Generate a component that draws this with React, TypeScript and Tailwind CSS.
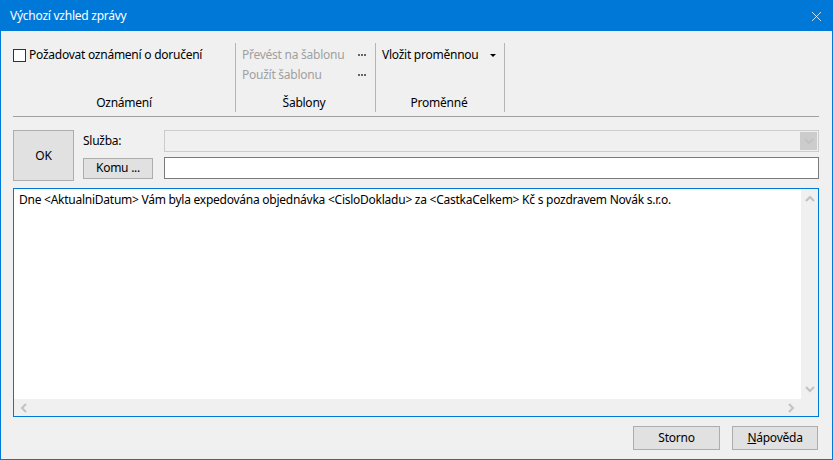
import { X } from 'lucide-react';

const font = { fontFamily: '"Noto Sans", "Liberation Sans", sans-serif' };

function Chevron({ dir }: { dir: 'up' | 'down' | 'left' | 'right' }) {
  const d = {
    up: 'M1 6 L5 2 L9 6',
    down: 'M1 2 L5 6 L9 2',
    left: 'M6 1 L2 5 L6 9',
    right: 'M2 1 L6 5 L2 9',
  }[dir];
  const box = dir === 'up' || dir === 'down' ? '0 0 10 8' : '0 0 8 10';
  return (
    <svg viewBox={box} className={dir === 'up' || dir === 'down' ? 'w-[10px] h-[8px]' : 'w-[8px] h-[10px]'}>
      <path d={d} fill="none" stroke="#c2c2c2" strokeWidth="2" />
    </svg>
  );
}

function Dots() {
  return (
    <span className="flex gap-[1px] items-center">
      <span className="w-[2px] h-[2px] bg-[#666]" />
      <span className="w-[2px] h-[2px] bg-[#666]" />
      <span className="w-[2px] h-[2px] bg-[#666]" />
    </span>
  );
}

export default function App() {
  return (
    <div
      className="w-[833px] h-[460px] bg-[#f0f0f0] border border-[#0078d7] flex flex-col text-[12px] tracking-[-0.25px] text-black overflow-hidden"
      style={font}
    >
      {/* Title bar */}
      <div className="h-[30px] bg-[#0078d7] flex items-center justify-between pl-[9px] pr-[7px] text-white shrink-0">
        <span className="text-[12px]">Výchozí vzhled zprávy</span>
        <X className="w-[17px] h-[17px]" strokeWidth={1.1} />
      </div>

      {/* Ribbon */}
      <div className="ml-[12px] mr-[13px] mt-[12px] h-[74px] flex border-b border-[#a0a0a0]">
        <div className="w-[223px] flex flex-col border-r border-[#b4b4b4] mb-[4px] pt-[2px]">
          <label className="flex items-center gap-[3px] h-[20px]">
            <span className="w-[13px] h-[13px] border border-[#333] bg-white" />
            <span>Požadovat oznámení o doručení</span>
          </label>
          <div className="mt-auto text-center">Oznámení</div>
        </div>
        <div className="w-[140px] flex flex-col border-r border-[#b4b4b4] pl-[6px] pr-[9px] mb-[4px] pt-[2px]">
          <div className="flex items-center justify-between h-[20px] text-[#a0a0a0]">
            <span>Převést na šablonu</span>
            <Dots />
          </div>
          <div className="flex items-center justify-between h-[20px] text-[#a0a0a0]">
            <span>Použít šablonu</span>
            <Dots />
          </div>
          <div className="mt-auto text-center">Šablony</div>
        </div>
        <div className="w-[129px] flex flex-col border-r border-[#b4b4b4] pl-[6px] pr-[8px] mb-[4px] pt-[2px]">
          <div className="flex items-center justify-between h-[20px]">
            <span>Vložit proměnnou</span>
            <span className="w-0 h-0 border-l-[3px] border-r-[3px] border-t-[3px] border-l-transparent border-r-transparent border-t-black" />
          </div>
          <div className="mt-auto text-center">Proměnné</div>
        </div>
      </div>

      {/* Service / recipient */}
      <div className="ml-[12px] mr-[13px] mt-[13px] flex gap-[9px]">
        <button className="w-[61px] h-[51px] bg-[#e1e1e1] border border-[#adadad]">OK</button>
        <div className="flex flex-col gap-[5px] flex-1">
          <div className="flex items-center h-[22px]">
            <span className="w-[81px]">Služba:</span>
            <div className="flex-1 h-[22px] border border-[#cccccc] bg-[#f0f0f0] flex justify-end p-[1px]">
              <div className="w-[17px] h-full bg-[#cccccc] flex items-center justify-center">
                <Chevron dir="down" />
              </div>
            </div>
          </div>
          <div className="flex items-center h-[22px]">
            <button className="w-[70px] h-[21px] bg-[#e1e1e1] border border-[#adadad] mr-[11px]">Komu ...</button>
            <div className="flex-1 h-[22px] border border-[#7a7a7a] bg-white" />
          </div>
        </div>
      </div>

      {/* Message body */}
      <div className="ml-[12px] mr-[13px] mt-[7px] h-[229px] border border-[#0078d7] bg-white flex flex-col">
        <div className="flex flex-1 min-h-0">
          <div className="flex-1 pl-[5px] pt-[2px]">
            Dne &lt;AktualniDatum&gt; Vám byla expedována objednávka &lt;CisloDokladu&gt; za &lt;CastkaCelkem&gt; Kč s pozdravem Novák s.r.o.
          </div>
          <div className="w-[17px] bg-[#f0f0f0] flex flex-col items-center justify-between py-[6px]">
            <Chevron dir="up" />
            <Chevron dir="down" />
          </div>
        </div>
        <div className="h-[17px] flex bg-[#f0f0f0]">
          <div className="flex-1 flex items-center justify-between px-[6px]">
            <Chevron dir="left" />
            <Chevron dir="right" />
          </div>
          <div className="w-[17px]" />
        </div>
      </div>

      {/* Footer buttons */}
      <div className="mx-[14px] mt-[9px] flex justify-end gap-[12px]">
        <button className="w-[87px] h-[24px] bg-[#e1e1e1] border border-[#adadad]">Storno</button>
        <button className="w-[86px] h-[24px] bg-[#e1e1e1] border border-[#adadad]">
          <span className="underline">N</span>ápověda
        </button>
      </div>
    </div>
  );
}
